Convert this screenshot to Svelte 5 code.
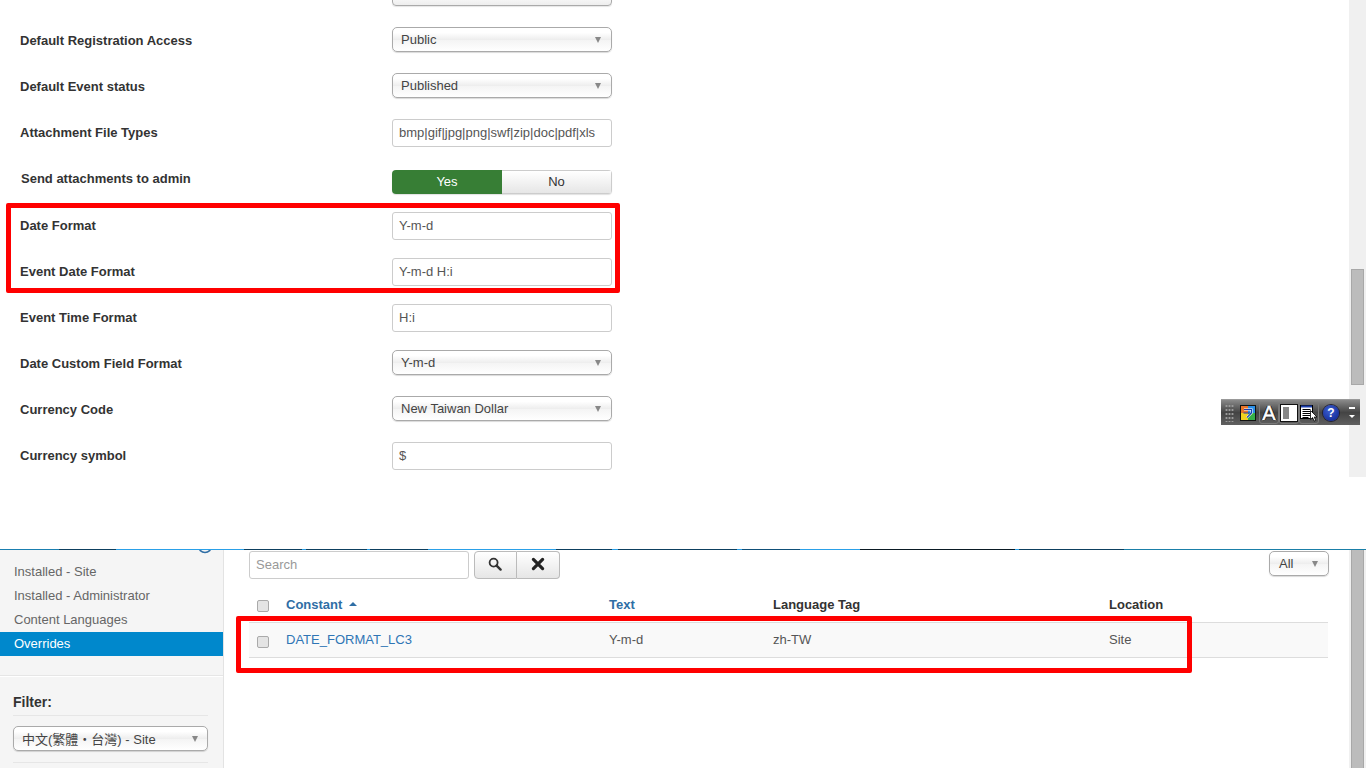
<script lang="ts">
  const fields = [
    { label: 'Default Registration Access', type: 'select', value: 'Public' },
    { label: 'Default Event status', type: 'select', value: 'Published' },
    { label: 'Attachment File Types', type: 'input', value: 'bmp|gif|jpg|png|swf|zip|doc|pdf|xls' },
    { label: 'Send attachments to admin', type: 'toggle', value: 'Yes' },
    { label: 'Date Format', type: 'input', value: 'Y-m-d' },
    { label: 'Event Date Format', type: 'input', value: 'Y-m-d H:i' },
    { label: 'Event Time Format', type: 'input', value: 'H:i' },
    { label: 'Date Custom Field Format', type: 'select', value: 'Y-m-d' },
    { label: 'Currency Code', type: 'select', value: 'New Taiwan Dollar' },
    { label: 'Currency symbol', type: 'input', value: '$' }
  ];

  const menu = ['Installed - Site', 'Installed - Administrator', 'Content Languages', 'Overrides'];
</script>

<div class="page">
  <section class="top">
    <div class="cut-select"></div>
    {#each fields as field}
      <div class="row" class:toggle-row={field.type === 'toggle'}>
        <span class="label">{field.label}</span>
        {#if field.type === 'select'}
          <div class="select"><span>{field.value}</span><i class="caret"></i></div>
        {:else if field.type === 'input'}
          <div class="input">{field.value}</div>
        {:else}
          <div class="toggle"><span class="yes">Yes</span><span class="no">No</span></div>
        {/if}
      </div>
    {/each}
  </section>

  <section class="bottom">
    <aside class="sidebar">
      <svg class="info" width="16" height="16" viewBox="0 0 16 16"><circle cx="8" cy="8" r="6.5" fill="none" stroke="#2f6ea5" stroke-width="1.5" /><circle cx="8" cy="8" r="3" fill="#2f6ea5" /></svg>
      <ul class="menu">
        {#each menu as item}
          <li class:active={item === 'Overrides'}>{item}</li>
        {/each}
      </ul>
      <div class="filter">
        <h4>Filter:</h4>
        <div class="select lang"><span>中文(繁體・台灣) - Site</span><i class="caret"></i></div>
        <div class="filter-end"></div>
      </div>
    </aside>

    <main class="content">
      <div class="tools">
        <div class="search">Search</div>
        <div class="btns">
          <span class="btn">
            <svg width="14" height="14" viewBox="0 0 14 14"><circle cx="5.6" cy="5.6" r="4" fill="none" stroke="#333" stroke-width="1.8" /><path d="M8.6 8.6L12.6 12.6" stroke="#333" stroke-width="2.4" stroke-linecap="round" /></svg>
          </span>
          <span class="btn">
            <svg width="14" height="14" viewBox="0 0 14 14"><path d="M2.4 2.4L11.6 11.6M11.6 2.4L2.4 11.6" stroke="#222" stroke-width="3.2" stroke-linecap="round" /></svg>
          </span>
        </div>
        <div class="select limit"><span>All</span><i class="caret"></i></div>
      </div>

      <div class="table">
        <div class="tr head">
          <span class="c-check"><i class="check"></i></span>
          <span class="c-const link">Constant <i class="sort"></i></span>
          <span class="c-text link">Text</span>
          <span class="c-tag">Language Tag</span>
          <span class="c-loc">Location</span>
        </div>
        <div class="tr body">
          <span class="c-check"><i class="check"></i></span>
          <span class="c-const blue">DATE_FORMAT_LC3</span>
          <span class="c-text">Y-m-d</span>
          <span class="c-tag">zh-TW</span>
          <span class="c-loc">Site</span>
        </div>
      </div>
    </main>
  </section>

  <div class="scrollbar top-bar"><div class="thumb"></div></div>
  <div class="scrollbar low-bar"><div class="low-thumb"></div></div>

  <div class="highlight h1"></div>
  <div class="highlight h2"></div>

  <div class="floating">
    <span class="grip"></span>
    <svg class="ime" width="16" height="16" viewBox="0 0 16 16">
      <rect width="16" height="16" fill="#111" />
      <rect x="1" y="1" width="7" height="7" fill="#e8742a" />
      <rect x="8" y="1" width="7" height="7" fill="#2a8fe8" />
      <rect x="1" y="8" width="7" height="7" fill="#f2d21f" />
      <rect x="8" y="8" width="7" height="7" fill="#35b04a" />
      <path d="M4 4.5h7.5v3.5L7 12.5" fill="none" stroke="#fff" stroke-width="2.2" />
      <path d="M4 4.5h7.5v3.5L7 12.5M3.5 8h7" fill="none" stroke="#1c3fae" stroke-width="1.1" />
    </svg>
    <span class="tool"><b>A</b></span>
    <span class="tool"><i class="half"></i></span>
    <span class="tool">
      <svg width="18" height="18" viewBox="0 0 18 18">
        <rect x="0.5" y="1.5" width="12" height="13" fill="#fff" stroke="#000" />
        <path d="M1 2.5h11" stroke="#1c3fae" stroke-width="2" />
        <path d="M2.5 5.5h8M2.5 7.5h8M2.5 9.5h8M2.5 11.5h8M2.5 13.5h6" stroke="#000" />
        <path d="M10.5 6.5l6.5 6.5h-2.8l1.6 3.4-1.6.7-1.6-3.5-2.1 2z" fill="#fff" stroke="#000" stroke-width=".8" />
      </svg>
    </span>
    <span class="help">?</span>
    <span class="arrows"><i class="dash"></i><i class="down"></i></span>
  </div>
</div>

<style>
  :global(body) {
    margin: 0;
    background: #fff;
  }

  .page {
    position: relative;
    width: 1366px;
    height: 768px;
    overflow: hidden;
    font-family: 'Liberation Sans', Arial, sans-serif;
    font-size: 13px;
    color: #555;
  }

  .top {
    display: flow-root;
    height: 549px;
    padding-left: 20px;
    box-sizing: border-box;
  }

  .cut-select {
    box-sizing: border-box;
    width: 220px;
    height: 14px;
    margin: -8px 0 21px 372px;
    border: 1px solid #aaa;
    border-radius: 4px;
    box-shadow: 0 1px 1px rgba(0, 0, 0, 0.1);
    background: linear-gradient(#fff, #eee);
  }

  .row {
    display: flex;
    align-items: flex-start;
    height: 46px;
  }

  .toggle-row {
    height: 47px;
  }

  .label {
    width: 372px;
    line-height: 28px;
    font-weight: 700;
    color: #333;
  }

  .toggle-row .label {
    padding-left: 1px;
    margin-right: -1px;
  }

  .select {
    display: flex;
    align-items: center;
    justify-content: space-between;
    box-sizing: border-box;
    width: 220px;
    height: 25px;
    padding: 0 10px 0 8px;
    border: 1px solid #aaa;
    border-radius: 5px;
    background: linear-gradient(#fff 0%, #fff 20%, #eee 50%, #f4f4f4 52%, #fff 100%);
    box-shadow: 0 1px 1px rgba(0, 0, 0, 0.15);
    color: #444;
  }

  .caret {
    width: 0;
    height: 0;
    border-left: 3.5px solid transparent;
    border-right: 3.5px solid transparent;
    border-top: 6px solid #888;
  }

  .input {
    box-sizing: border-box;
    width: 220px;
    height: 28px;
    padding: 0 6px;
    line-height: 26px;
    border: 1px solid #ccc;
    border-radius: 3px;
    color: #555;
  }

  .toggle {
    display: flex;
    width: 220px;
    height: 24px;
    margin-top: 5px;
    border-radius: 4px;
    text-align: center;
    line-height: 23px;
    overflow: hidden;
    box-shadow: 0 1px 1px rgba(0, 0, 0, 0.12);
  }

  .yes {
    width: 110px;
    background: #377e35;
    color: #fff;
  }

  .no {
    box-sizing: border-box;
    width: 110px;
    border: 1px solid #ccc;
    border-left: 0;
    line-height: 22px;
    background: linear-gradient(#fff, #e6e6e6);
    color: #333;
  }

  .bottom {
    display: flex;
    height: 219px;
    box-sizing: border-box;
    border-top: 1px solid transparent;
    border-image: linear-gradient(
        90deg,
        #1a7fb0 0 60px,
        #0d3f5f 60px 117px,
        #2aa0e8 117px 245px,
        #0d3f5f 245px 303px,
        #2aa0e8 303px 307px,
        #0d3f5f 307px 367px,
        #2aa0e8 367px 370px,
        #0d3f5f 370px 428px,
        #2aa0e8 428px 556px,
        #0d3f5f 556px 612px,
        #2aa0e8 612px 618px,
        #0d3f5f 618px 737px,
        #2aa0e8 737px 742px,
        #0f4f78 742px 800px,
        #2aa0e8 800px 860px,
        #0a1a24 860px 1015px,
        #2aa0e8 1015px 1019px,
        #0d3f5f 1019px 1123px,
        #1a7fa8 1123px
      )
      1;
  }

  .sidebar {
    position: relative;
    box-sizing: border-box;
    width: 224px;
    flex: none;
    background: #f5f5f5;
    border-right: 1px solid #e3e3e3;
    overflow: hidden;
  }

  .info {
    position: absolute;
    left: 197px;
    top: -12px;
  }

  .menu {
    list-style: none;
    margin: 10px 0 0;
    padding: 0 0 19px;
    border-bottom: 1px solid #e6e6e6;
    box-shadow: 0 1px 0 #fff;
  }

  .menu li {
    height: 24px;
    padding-left: 14px;
    line-height: 24px;
    color: #666;
  }

  .menu li.active {
    background: #0088cc;
    color: #fff;
  }

  .filter {
    padding: 17px 15px 0 13px;
  }

  .filter h4 {
    margin: 0;
    padding-bottom: 4px;
    font-size: 14px;
    line-height: 18px;
    color: #333;
    border-bottom: 1px solid #e6e6e6;
  }

  .lang {
    width: 195px;
    height: 25px;
    margin-top: 10px;
    padding: 0 9px 0 8px;
    font-family: 'Liberation Sans', 'Noto Sans CJK TC', sans-serif;
  }

  .filter-end {
    margin-top: 11px;
    border-top: 1px solid #e6e6e6;
  }

  .content {
    flex: 1;
    padding: 1px 38px 0 25px;
  }

  .tools {
    display: flex;
    align-items: flex-start;
  }

  .search {
    box-sizing: border-box;
    width: 220px;
    height: 28px;
    padding: 0 6px;
    line-height: 26px;
    border: 1px solid #ccc;
    border-radius: 3px;
    color: #999;
  }

  .btns {
    display: flex;
    margin-left: 5px;
  }

  .btn {
    display: flex;
    align-items: center;
    justify-content: center;
    box-sizing: border-box;
    width: 43px;
    height: 28px;
    padding-bottom: 3px;
    border: 1px solid #bbb;
    background: linear-gradient(#fff, #e6e6e6);
  }

  .btn:first-child {
    padding-right: 2px;
    border-radius: 4px 0 0 4px;
  }

  .btn:last-child {
    padding-right: 1px;
    border-left: 0;
    border-radius: 0 4px 4px 0;
  }

  .limit {
    width: 60px;
    margin-left: auto;
    margin-right: -1px;
    padding-left: 9px;
    color: #444;
  }

  .table {
    margin-top: 13px;
  }

  .tr {
    display: flex;
    align-items: center;
    box-sizing: border-box;
  }

  .head {
    height: 31px;
    padding-bottom: 6px;
    font-weight: 700;
    color: #333;
    border-bottom: 1px solid #ddd;
  }

  .body {
    height: 35px;
    padding-bottom: 1px;
    background: #f9f9f9;
    border-bottom: 1px solid #ddd;
    color: #555;
  }

  .c-check {
    width: 37px;
    padding-left: 8px;
    box-sizing: border-box;
    display: flex;
    align-items: center;
    margin-top: 4px;
  }

  .c-const {
    width: 323px;
  }

  .c-text {
    width: 164px;
  }

  .c-tag {
    width: 336px;
  }

  .link {
    color: #2f6ea5;
  }

  .blue {
    color: #2f75b5;
  }

  .check {
    box-sizing: border-box;
    width: 12px;
    height: 12px;
    border: 1px solid #aaa;
    border-radius: 2px;
    background: #e4e4e4;
  }

  .sort {
    display: inline-block;
    width: 0;
    height: 0;
    margin: 0 0 3px 3px;
    border-left: 4px solid transparent;
    border-right: 4px solid transparent;
    border-bottom: 4px solid #2f6ea5;
  }

  .scrollbar {
    position: absolute;
    right: 0;
    width: 17px;
    background: #f0f0f0;
  }

  .top-bar {
    top: 0;
    height: 477px;
  }

  .thumb {
    box-sizing: border-box;
    width: 13px;
    height: 116px;
    margin: 269px 0 0 2px;
    background: #bcbcbc;
    border: 1px solid #a8a8a8;
  }

  .low-bar {
    top: 550px;
    height: 218px;
  }

  .low-thumb {
    box-sizing: border-box;
    width: 13px;
    height: 218px;
    margin-left: 2px;
    background: #bcbcbc;
    border: 1px solid #a8a8a8;
    border-width: 0 1px;
  }

  .highlight {
    position: absolute;
    box-sizing: border-box;
    border: 5px solid #ff0000;
    border-radius: 2px;
  }

  .h1 {
    left: 6px;
    top: 203px;
    width: 614px;
    height: 90px;
  }

  .h2 {
    left: 236px;
    top: 616px;
    width: 956px;
    height: 57px;
  }

  .floating {
    position: absolute;
    left: 1221px;
    top: 399px;
    box-sizing: border-box;
    display: flex;
    align-items: center;
    width: 139px;
    height: 26px;
    padding-left: 4px;
    background: linear-gradient(#8a8a8a, #444 50%, #606060);
    border-top: 1px solid #999;
  }

  .grip {
    width: 9px;
    height: 18px;
    margin-right: 6px;
    background: radial-gradient(circle, #9a9a9a 1px, transparent 1.2px) 0 0 / 3px 4px;
  }

  .ime {
    margin-right: 3px;
  }

  .tool {
    display: flex;
    align-items: center;
    justify-content: center;
    box-sizing: border-box;
    width: 20px;
    height: 22px;
    border: 1px solid #7a7a7a;
    border-radius: 3px;
  }

  .tool b {
    font-family: 'Liberation Sans', sans-serif;
    font-size: 20px;
    font-weight: 400;
    line-height: 20px;
    color: #fff;
    -webkit-text-stroke: 0.5px #fff;
    text-shadow:
      1px 0 0 #000,
      -1px 0 0 #000,
      0 1px 0 #000;
  }

  .half {
    display: block;
    box-sizing: border-box;
    width: 16px;
    height: 16px;
    border: 2px solid #fff;
    background: linear-gradient(90deg, #888 50%, #fff 50%);
    box-shadow: 0 0 0 1px #111;
  }

  .help {
    width: 16px;
    height: 16px;
    margin-left: 4px;
    border-radius: 50%;
    background: radial-gradient(circle at 40% 35%, #3c5fd0, #0a1f8a);
    box-shadow: 0 0 0 1px #223;
    color: #fff;
    font-size: 12px;
    font-weight: 700;
    line-height: 16px;
    text-align: center;
  }

  .arrows {
    display: flex;
    flex-direction: column;
    align-items: center;
    gap: 6px;
    margin-left: 10px;
  }

  .dash {
    width: 6px;
    height: 2px;
    background: #fff;
  }

  .down {
    width: 0;
    height: 0;
    border-left: 3px solid transparent;
    border-right: 3px solid transparent;
    border-top: 3px solid #fff;
  }
</style>
